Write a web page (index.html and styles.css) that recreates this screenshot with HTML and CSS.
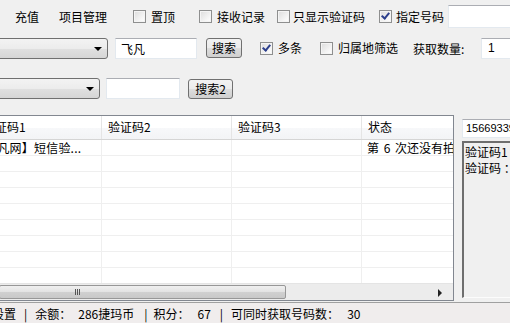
FILE: index.html
```html
<!DOCTYPE html>
<html>
  <head>
    <meta charset="utf-8" />
    <title>接码</title>
    <link rel="stylesheet" href="styles.css">
  </head>
  <body>
    <div class="win">
      <!-- top menu + options -->
      <div class="bar1">
        <span class="menu m1">充值</span>
        <span class="menu m2">项目管理</span>
        <label class="chk c1"><span class="box"></span>置顶</label>
        <label class="chk c2"><span class="box"></span>接收记录</label>
        <label class="chk c3"><span class="box"></span>只显示验证码</label>
        <label class="chk c4"><span class="box on"></span>指定号码</label>
        <span class="txt t1"></span>
      </div>
      <div class="bar2">
        <span class="combo cb1"><span class="arrow"></span></span>
        <span class="txt t2">飞凡</span>
        <span class="btn b1">搜索</span>
        <label class="chk c5"><span class="box on"></span>多条</label>
        <label class="chk c6"><span class="box"></span>归属地筛选</label>
        <span class="lbl">获取数量:</span>
        <span class="txt t3">1</span>
      </div>
      <div class="bar3">
        <span class="combo cb2"><span class="arrow"></span></span>
        <span class="txt t4"></span>
        <span class="btn b2">搜索2</span>
      </div>
      <div class="main">
        <div class="list">
          <div class="grid head">
            <div class="hc first">验证码1</div>
            <div class="hc">验证码2</div>
            <div class="hc">验证码3</div>
            <div class="hc">状态</div>
          </div>
          <div class="rows">
            <div class="grid row">
              <div class="cell first">【飞凡网】短信验...</div>
              <div class="cell"></div>
              <div class="cell"></div>
              <div class="cell spaced">第 6 次还没有拍到</div>
            </div>
            <div class="grid row"><div class="cell first"></div><div class="cell"></div><div class="cell"></div><div class="cell"></div></div>
            <div class="grid row"><div class="cell first"></div><div class="cell"></div><div class="cell"></div><div class="cell"></div></div>
            <div class="grid row"><div class="cell first"></div><div class="cell"></div><div class="cell"></div><div class="cell"></div></div>
            <div class="grid row"><div class="cell first"></div><div class="cell"></div><div class="cell"></div><div class="cell"></div></div>
            <div class="grid row"><div class="cell first"></div><div class="cell"></div><div class="cell"></div><div class="cell"></div></div>
            <div class="grid row"><div class="cell first"></div><div class="cell"></div><div class="cell"></div><div class="cell"></div></div>
            <div class="grid row"><div class="cell first"></div><div class="cell"></div><div class="cell"></div><div class="cell"></div></div>
            <div class="grid row"><div class="cell first"></div><div class="cell"></div><div class="cell"></div><div class="cell"></div></div>
          </div>
          <div class="hscroll">
            <span class="thumb"><span class="grip"></span></span>
            <span class="rarrow"></span>
          </div>
        </div>
        <div class="side">
          <span class="txt t5">15669339412</span>
          <div class="memo">验证码1<br />验证码 ：</div>
        </div>
      </div>
      <div class="status">
        <span class="s0">设置</span>
        <span class="pipe p1">|</span>
        <span class="s1">余额：</span>
        <span class="s2">286捷玛币</span>
        <span class="pipe p2">|</span>
        <span class="s3">积分：</span>
        <span class="s4">67</span>
        <span class="pipe p3">|</span>
        <span class="s5">可同时获取号码数：</span>
        <span class="s6">30</span>
      </div>
    </div>
  </body>
</html>
```

FILE: styles.css
```css
body {
  margin: 0;
  background-color: #f0f0f0;
  font-family: "Noto Sans CJK SC", "DejaVu Sans", sans-serif;
  font-size: 12px;
  color: #000;
}
.win {
  width: 510px;
  height: 323px;
  overflow: hidden;
  display: flex;
  flex-direction: column;
  background-color: #f0f0f0;
}
.bar1,
.bar2,
.bar3 {
  flex: none;
  display: flex;
  white-space: nowrap;
}
.bar1 > *,
.bar2 > *,
.bar3 > *,
.status > * {
  flex: none;
}
.bar1 {
  height: 33px;
  align-items: center;
}
.bar2 {
  height: 30px;
  align-items: center;
}
.bar3 {
  height: 52px;
  align-items: flex-start;
  padding-top: 15px;
  box-sizing: border-box;
}
.menu {
  line-height: 16px;
}
.m1 {
  margin-left: 15px;
}
.m2 {
  margin-left: 20px;
}
.chk {
  display: flex;
  align-items: center;
  gap: 5px;
  line-height: 16px;
}
.box {
  flex: none;
  width: 11px;
  height: 11px;
  border: 1px solid #8e8f8f;
  background: linear-gradient(135deg, #dcdcdc, #f6f6f6 70%, #ffffff);
  box-shadow: inset 0 0 0 1px #f4f4f4;
  position: relative;
}
.box.on::after {
  content: "";
  position: absolute;
  left: 3px;
  top: 0px;
  width: 3px;
  height: 6px;
  border-right: 2px solid #2c3f8c;
  border-bottom: 2px solid #2c3f8c;
  transform: rotate(40deg);
}
.c1 {
  margin-left: 26px;
}
.c2 {
  margin-left: 24px;
}
.c3 {
  margin-left: 12px;
  gap: 3px;
}
.c4 {
  margin-left: 14px;
  gap: 4px;
}
.c5 {
  margin-left: 18px;
}
.c6 {
  margin-left: 18px;
}
.txt {
  display: block;
  box-sizing: border-box;
  height: 21px;
  background-color: #fff;
  border: 1px solid #e3e9ef;
  border-top-color: #abadb3;
  padding: 0 4px;
  line-height: 19px;
}
.t1 {
  margin-left: 4px;
  width: 80px;
  height: 23px;
}
.t2 {
  margin-left: 7px;
  width: 82px;
  padding-left: 5px;
}
.t3 {
  margin-left: 12px;
  width: 40px;
  padding-left: 6px;
  font-family: "Liberation Sans", sans-serif;
}
.t4 {
  margin-left: 6px;
  width: 74px;
}
.combo {
  display: block;
  box-sizing: border-box;
  height: 21px;
  border: 1px solid #707070;
  border-radius: 3px;
  background: linear-gradient(#f3f3f3, #ececec 50%, #e0e0e0 52%, #d6d6d6);
  position: relative;
}
.cb1 {
  margin-left: -60px;
  width: 168px;
}
.cb2 {
  margin-left: -60px;
  width: 160px;
}
.arrow {
  position: absolute;
  right: 5px;
  top: 8px;
  border-left: 4px solid transparent;
  border-right: 4px solid transparent;
  border-top: 4px solid #000;
}
.btn {
  display: block;
  box-sizing: border-box;
  height: 20px;
  border: 1px solid #707070;
  border-radius: 3px;
  background: linear-gradient(#f2f2f2, #ebebeb 50%, #dddddd 52%, #cfcfcf);
  text-align: center;
  line-height: 18px;
}
.b1 {
  margin-left: 9px;
  width: 36px;
}
.b2 {
  margin-left: 8px;
  width: 45px;
  margin-top: 1px;
}
.lbl {
  margin-left: 15px;
  width: 56px;
}
.main {
  height: 186px;
  flex: none;
  display: flex;
}
.list {
  flex: none;
  margin-left: -40px;
  width: 494px;
  box-sizing: border-box;
  border: 1px solid #828790;
  background-color: #fff;
  display: flex;
  flex-direction: column;
  overflow: hidden;
}
.grid {
  display: grid;
  grid-template-columns: 141px 130px 130px 160px;
}
.head {
  height: 24px;
  flex: none;
  background: linear-gradient(#ffffff, #ffffff 50%, #f7f8fa 52%, #f3f4f6);
  border-bottom: 1px solid #d5d5d5;
  box-sizing: border-box;
}
.hc {
  border-right: 1px solid #e5e5e5;
  padding-left: 6px;
  line-height: 22px;
  white-space: nowrap;
  overflow: hidden;
}
.hc.first {
  padding-left: 22px;
}
.rows {
  flex: 1;
  overflow: hidden;
}
.row {
  height: 16px;
  box-sizing: border-box;
  border-bottom: 1px solid #efefef;
}
.cell {
  border-right: 1px solid #efefef;
  padding-left: 5px;
  line-height: 15px;
  white-space: nowrap;
  overflow: hidden;
}
.cell.first {
  padding-left: 12px;
  letter-spacing: 0.2px;
}
.cell.spaced {
  word-spacing: 2px;
}
.hscroll {
  height: 17px;
  flex: none;
  background-color: #ececec;
  border-top: 1px solid #e4e4e4;
  box-sizing: border-box;
  display: flex;
  align-items: center;
  position: relative;
}
.thumb {
  display: block;
  margin-left: 38px;
  width: 287px;
  height: 14px;
  box-sizing: border-box;
  border: 1px solid #979797;
  border-radius: 2px;
  background: linear-gradient(#f0f0f0, #e2e2e2 50%, #d0d0d0 52%, #c8c8c8);
  position: relative;
}
.grip {
  position: absolute;
  left: 75px;
  top: 3px;
  width: 6px;
  height: 6px;
  background: repeating-linear-gradient(90deg, #555 0 1px, transparent 1px 2px);
}
.rarrow {
  position: absolute;
  right: 11px;
  top: 5px;
  border-top: 4px solid transparent;
  border-bottom: 4px solid transparent;
  border-left: 4px solid #222;
}
.side {
  margin-left: 8px;
  flex: none;
  width: 60px;
  display: flex;
  flex-direction: column;
  padding-top: 4px;
  gap: 3px;
  overflow: hidden;
}
.t5 {
  flex: none;
  width: 80px;
  height: 19px;
  line-height: 17px;
  padding-left: 3px;
  font-family: "Liberation Sans", sans-serif;
  font-size: 11px;
}
.memo {
  flex: none;
  width: 80px;
  height: 157px;
  box-sizing: border-box;
  border-top: 2px solid #6e6e6e;
  border-left: 2px solid #6e6e6e;
  border-bottom: 1px solid #fcfcfc;
  background-color: #f0f0f0;
  padding: 1px 0 0 1px;
  line-height: 16px;
  white-space: nowrap;
}
.status {
  flex: 1;
  border-top: 1px solid #a0a0a0;
  margin-top: 1px;
  background-color: #f0eded;
  display: flex;
  align-items: center;
  white-space: nowrap;
}
.s0 {
  margin-left: -8px;
}
.pipe {
  margin-left: 8px;
}
.s1 {
  margin-left: 8px;
}
.s2 {
  margin-left: 7px;
}
.p2 {
  margin-left: 10px;
}
.s3 {
  margin-left: 6px;
}
.s4 {
  margin-left: 8px;
}
.p3 {
  margin-left: 9px;
}
.s5 {
  margin-left: 8px;
}
.s6 {
  margin-left: 8px;
}
```
